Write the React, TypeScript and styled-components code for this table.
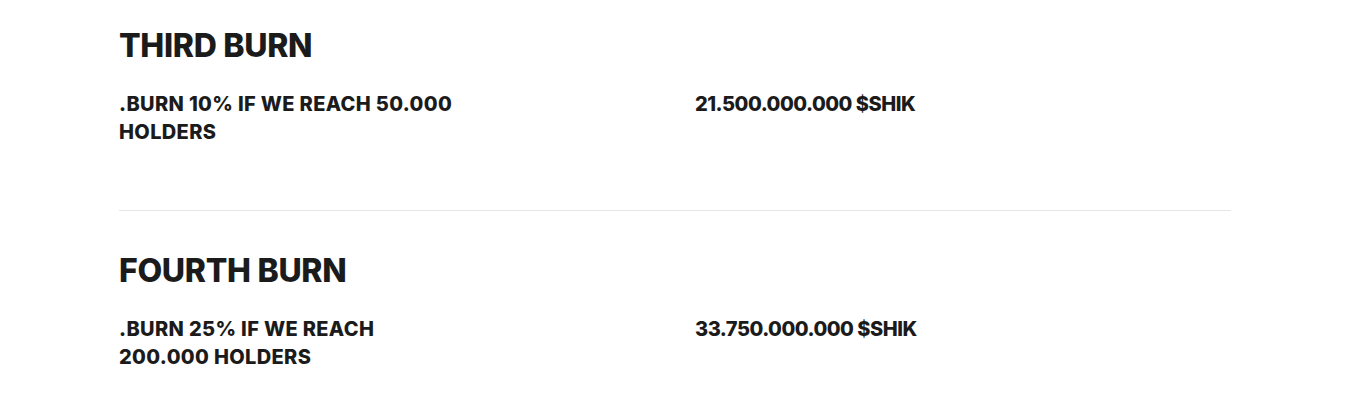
import React from "react";
import styled, { createGlobalStyle } from "styled-components";

const Global = createGlobalStyle`
  html, body { margin: 0; padding: 0; background: #ffffff; }
  body { font-family: Inter, "Noto Sans", sans-serif; color: #1b1b1b; }
`;

const Page = styled.main`
  width: 1112px;
  margin: 0 auto;
  padding-top: 26px;
`;

const Section = styled.section`
  padding-bottom: 64px;
  & + & {
    border-top: 1px solid #e6e6e6;
    padding-top: 40px;
  }
`;

const Title = styled.h2`
  margin: 0 0 25px;
  font-size: 32px;
  line-height: 39px;
  font-weight: 800;
  letter-spacing: -0.3px;
  text-transform: uppercase;
`;

const Row = styled.div`
  display: grid;
  grid-template-columns: 576px 1fr;
`;

const Cell = styled.p<{ $max?: number; $spacing?: number }>`
  margin: 0;
  font-size: 20px;
  line-height: 28px;
  font-weight: 800;
  text-transform: uppercase;
  letter-spacing: ${(p) => p.$spacing ?? 0}px;
  max-width: ${(p) => (p.$max ? `${p.$max}px` : "none")};
`;

const burns = [
  { title: "Third Burn", cond: ".Burn 10% if we reach 50.000 holders", amount: "21.500.000.000 $SHIK" },
  { title: "Fourth Burn", cond: ".Burn 25% if we reach 200.000 holders", amount: "33.750.000.000 $SHIK" },
];

export default function App() {
  return (
    <>
      <Global />
      <Page>
        {burns.map((b) => (
          <Section key={b.title}>
            <Title>{b.title}</Title>
            <Row>
              <Cell $max={340} $spacing={0.35}>{b.cond}</Cell>
              <Cell $spacing={-0.5}>{b.amount}</Cell>
            </Row>
          </Section>
        ))}
      </Page>
    </>
  );
}
